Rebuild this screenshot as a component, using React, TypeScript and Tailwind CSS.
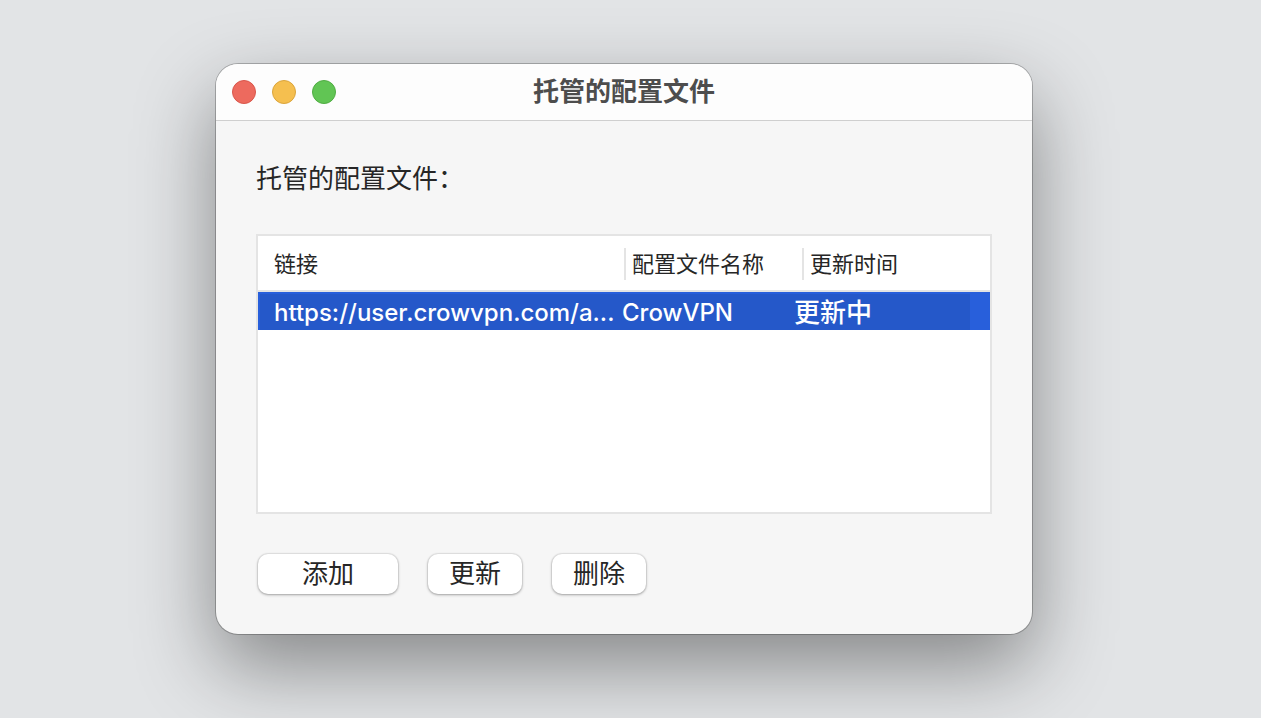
import React from "react";

type Profile = { url: string; name: string; updated: string };

const profiles: Profile[] = [
  { url: "https://user.crowvpn.com/a...", name: "CrowVPN", updated: "更新中" },
];

const lights = [
  { label: "关闭", color: "bg-[#ed6a5e] border-[#d9564b]" },
  { label: "最小化", color: "bg-[#f5bf4f] border-[#dba53c]" },
  { label: "缩放", color: "bg-[#61c554] border-[#50ad43]" },
];

const actions = [
  { label: "添加", width: "w-[140px]" },
  { label: "更新", width: "w-[94px]" },
  { label: "删除", width: "w-[94px]" },
];

export default function App() {
  return (
    <main className="min-h-screen overflow-hidden bg-[#e2e4e6] pt-16 pr-[229px] pb-[84px] pl-[216px] font-['Inter','Noto_Sans_CJK_SC',sans-serif] text-[#262626]">
      <section className="rounded-[22px] bg-[#f6f6f6] shadow-[0_0_0_1px_rgba(0,0,0,0.24),0_32px_80px_rgba(0,0,0,0.41)]">
        <header className="grid h-[57px] grid-cols-[1fr_auto_1fr] items-center rounded-t-[22px] border-b border-[#cfcfcf] bg-[#fdfdfd] px-4">
          <div className="flex gap-4">
            {lights.map((l) => (
              <button
                key={l.label}
                type="button"
                aria-label={l.label}
                className={`size-6 rounded-full border ${l.color}`}
              />
            ))}
          </div>
          <h1 className="text-[26px] leading-8 font-bold text-[#4d4d4d]">托管的配置文件</h1>
        </header>

        <div className="px-10 pt-[42px] pb-10">
          <h2 id="profiles-label" className="text-[26px] leading-8">
            托管的配置文件：
          </h2>

          <div className="mt-[39px] min-h-[280px] border-2 border-[#e4e4e4] bg-white">
            <table
              aria-labelledby="profiles-label"
              className="w-full table-fixed border-separate border-spacing-0 text-left"
            >
              <colgroup>
                <col className="w-[358px]" />
                <col className="w-[174px]" />
                <col />
              </colgroup>
              <thead className="text-[22px] leading-8">
                <tr>
                  <th className="h-14 border-b-2 border-[#e4e4e4] p-0 pt-0.5 pl-4 font-normal">链接</th>
                  <th className="h-14 border-b-2 border-[#e4e4e4] p-0 pt-0.5 pl-2 font-normal whitespace-nowrap">
                    <div className="border-l-2 border-[#e4e4e4] pl-1.5">配置文件名称</div>
                  </th>
                  <th className="h-14 border-b-2 border-[#e4e4e4] p-0 pt-0.5 pl-3 font-normal whitespace-nowrap">
                    <div className="border-l-2 border-[#e4e4e4] pl-1.5">更新时间</div>
                  </th>
                </tr>
              </thead>
              <tbody className="text-2xl leading-[34px] font-medium text-white">
                {profiles.map((p) => (
                  <tr key={p.url} className="bg-[#2558c9]">
                    <td className="border-t-2 border-l-2 border-[#285fdb] p-0 pt-0.5 pl-3.5 whitespace-nowrap">{p.url}</td>
                    <td className="border-t-2 border-[#285fdb] p-0 pt-0.5 pl-1.5 whitespace-nowrap">{p.name}</td>
                    <td className="border-t-2 border-r-20 border-[#285fdb] p-0 pt-0.5 pl-1 text-[26px] whitespace-nowrap">
                      {p.updated}
                    </td>
                  </tr>
                ))}
              </tbody>
            </table>
          </div>

          <div className="mt-10 flex gap-[30px] pl-0.5">
            {actions.map((a) => (
              <button
                key={a.label}
                type="button"
                className={`h-10 rounded-[10px] bg-white text-[26px] leading-8 shadow-[0_0_1px_1px_rgba(0,0,0,0.07),0_1px_3px_rgba(0,0,0,0.3)] ${a.width}`}
              >
                {a.label}
              </button>
            ))}
          </div>
        </div>
      </section>
    </main>
  );
}
